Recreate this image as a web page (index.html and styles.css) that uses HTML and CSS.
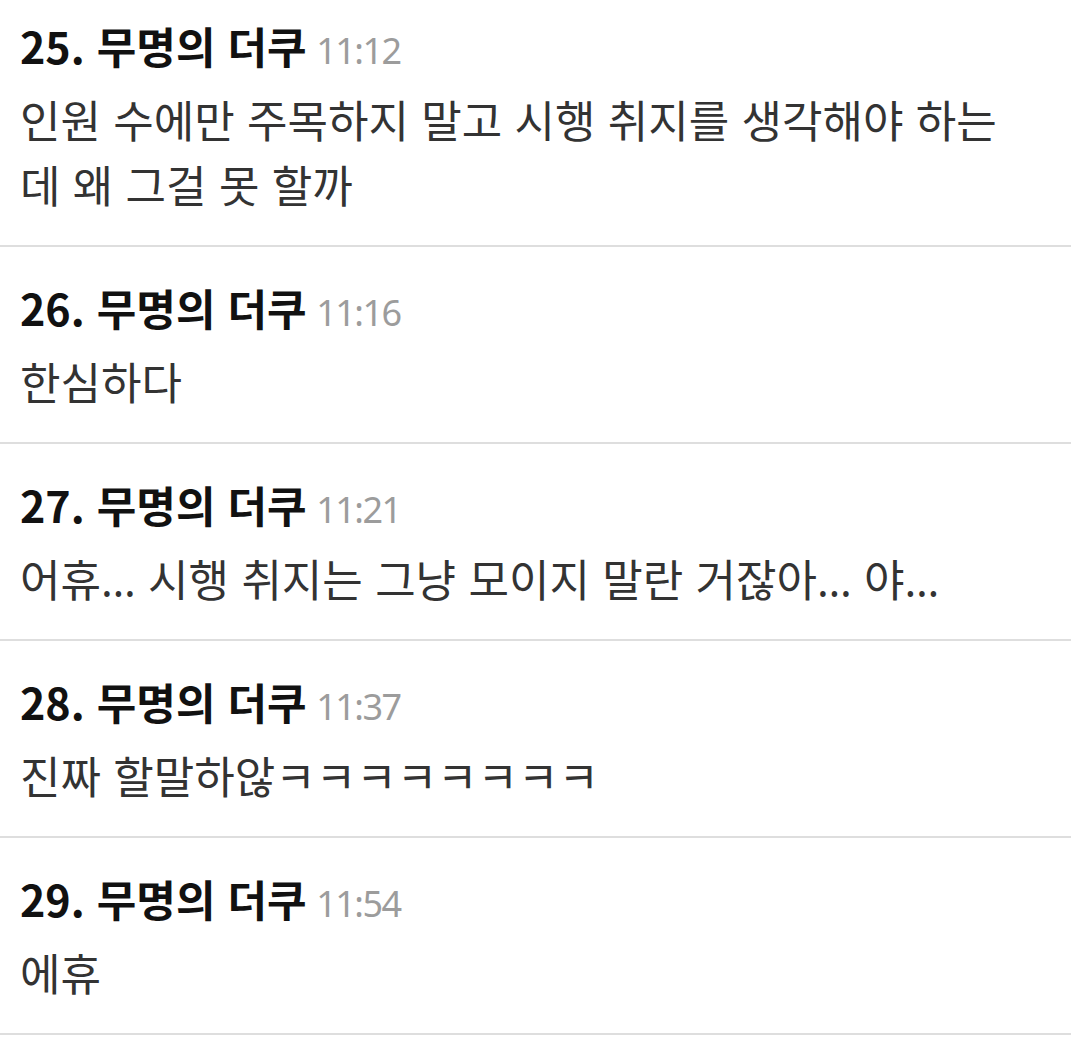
FILE: index.html
```html
<!DOCTYPE html>
<html lang="ko">
<head>
  <meta charset="UTF-8">
  <title>댓글</title>
  <link rel="stylesheet" href="styles.css">
</head>
<body>
  <ul class="comment-list">
    <li class="comment">
      <div class="comment-head">
        <span class="comment-name">25. 무명의 더쿠</span>
        <span class="comment-time">11:12</span>
      </div>
      <p class="comment-body">인원 수에만 주목하지 말고 시행 취지를 생각해야 하는데 왜 그걸 못 할까</p>
    </li>
    <li class="comment">
      <div class="comment-head">
        <span class="comment-name">26. 무명의 더쿠</span>
        <span class="comment-time">11:16</span>
      </div>
      <p class="comment-body">한심하다</p>
    </li>
    <li class="comment">
      <div class="comment-head">
        <span class="comment-name">27. 무명의 더쿠</span>
        <span class="comment-time">11:21</span>
      </div>
      <p class="comment-body">어휴<span class="dots">…</span> 시행 취지는 그냥 모이지 말란 거잖아<span class="dots">…</span> 야<span class="dots">…</span></p>
    </li>
    <li class="comment">
      <div class="comment-head">
        <span class="comment-name">28. 무명의 더쿠</span>
        <span class="comment-time">11:37</span>
      </div>
      <p class="comment-body">진짜 할말하않ㅋㅋㅋㅋㅋㅋㅋㅋ</p>
    </li>
    <li class="comment">
      <div class="comment-head">
        <span class="comment-name">29. 무명의 더쿠</span>
        <span class="comment-time">11:54</span>
      </div>
      <p class="comment-body">에휴</p>
    </li>
  </ul>
</body>
</html>
```

FILE: styles.css
```css
body {
  margin: 0;
  background: #fff;
  font-family: "Noto Sans CJK KR", "Noto Sans", sans-serif;
}
.comment-list {
  list-style: none;
  margin: -15px 0 0 0;
  padding: 0;
}
.comment {
  padding: 30px 40px 28px 20px;
  border-bottom: 2px solid #dedede;
}
.comment-head {
  height: 60px;
  line-height: 60px;
  white-space: nowrap;
}
.comment-name {
  font-size: 43px;
  font-weight: bold;
  color: #111;
}
.comment-time {
  margin-left: 5px;
  font-family: "Noto Sans", sans-serif;
  font-size: 36px;
  letter-spacing: -1.5px;
  color: #9c9c9c;
}
.comment-body {
  margin: 12px 0 0 0;
  font-size: 44px;
  line-height: 65px;
  color: #333;
  word-break: break-all;
}
/* latin ellipsis sits on the baseline, the CJK one is centred */
.dots {
  font-family: "Noto Sans", sans-serif;
  line-height: 0;
}
```
